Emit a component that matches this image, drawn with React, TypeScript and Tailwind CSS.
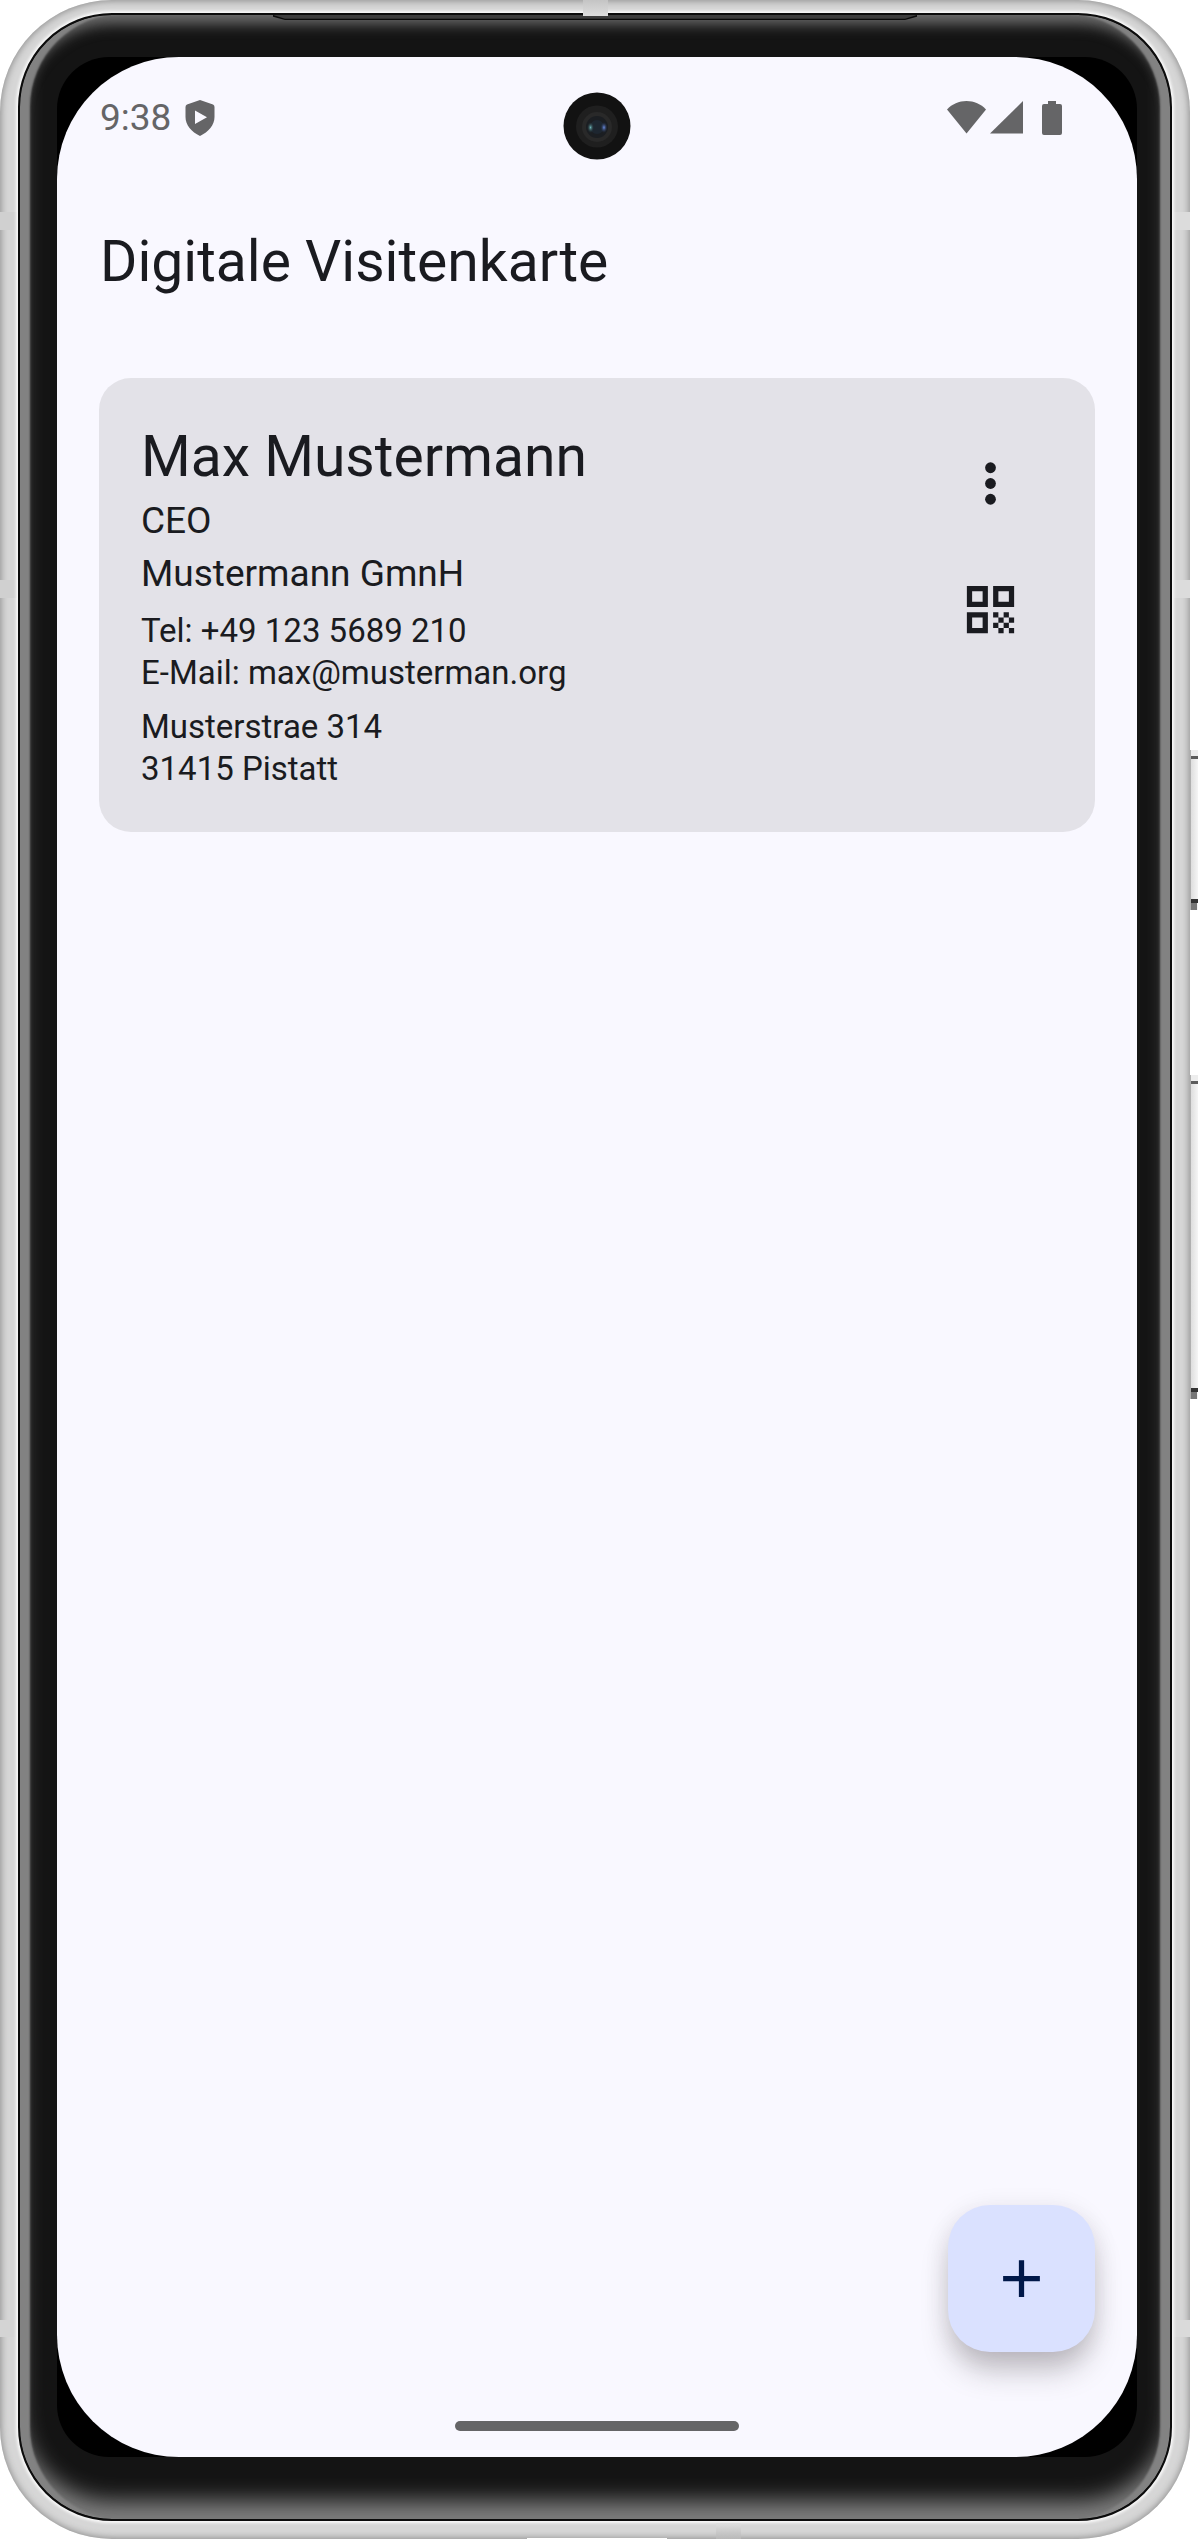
import React from "react";

const contact = {
  name: "Max Mustermann",
  role: "CEO",
  company: "Mustermann GmnH",
  phone: "+49 123 5689 210",
  email: "max@musterman.org",
  street: "Musterstrae 314",
  city: "31415 Pistatt",
};

function ShieldIcon() {
  return (
    <svg className="h-[36px] w-[30px]" viewBox="0 0 30 36" aria-hidden="true">
      <path
        fill="#656567"
        fillRule="evenodd"
        d="M15 0 L28 4.5 Q29.5 5 29.5 7 V17 C29.5 25 23.5 32 15 36 C6.500 32 .5 25 .5 17 V7 Q.5 5 2 4.500Z M10 10.500 V24 L22 17.200Z"
      />
    </svg>
  );
}

function WifiIcon() {
  return (
    <svg className="h-[34px] w-[39px]" viewBox="0 0 39 34" aria-hidden="true">
      <path fill="#656567" d="M19.500 32.500 L0 8.500 C5 3 12 0 19.500 0 S34 3 39 8.500Z" />
    </svg>
  );
}

function SignalIcon() {
  return (
    <svg className="h-[34px] w-[33px]" viewBox="0 0 33 34" aria-hidden="true">
      <path fill="#656567" d="M33 0 V32.500 H0Z" />
    </svg>
  );
}

function BatteryIcon() {
  return (
    <svg className="h-[34px] w-[20px]" viewBox="0 0 20 34" aria-hidden="true">
      <path
        fill="#656567"
        d="M6 0 H14 V3 H18 Q20 3 20 5 V32 Q20 34 18 34 H2 Q0 34 0 32 V5 Q0 3 2 3 H6Z"
      />
    </svg>
  );
}

function MoreIcon() {
  return (
    <svg className="size-[63px]" viewBox="0 0 24 24" fill="#1a1b20" aria-hidden="true">
      <circle cx="12" cy="6" r="2.050" />
      <circle cx="12" cy="12" r="2.050" />
      <circle cx="12" cy="18" r="2.050" />
    </svg>
  );
}

function QrIcon() {
  return (
    <svg className="size-[63px]" viewBox="0 0 24 24" fill="#1a1b20" aria-hidden="true">
      <path
        fillRule="evenodd"
        d="M3 3h8v8H3zM5 5v4h4V5zM13 3h8v8h-8zM15 5v4h4V5zM3 13h8v8H3zM5 15v4h4v-4z"
      />
      <path d="M13 13h2v2h-2zM17 13h2v2h-2zM15 15h2v2h-2zM19 15h2v2h-2zM13 17h2v2h-2zM17 17h2v2h-2zM15 19h2v2h-2zM19 19h2v2h-2z" />
    </svg>
  );
}

function CameraHole() {
  return (
    <svg
      className="absolute left-1/2 top-[35px] size-[68px] -translate-x-1/2"
      viewBox="0 0 68 68"
      aria-hidden="true"
    >
      <defs>
        <radialGradient id="lensTeal">
          <stop offset="0" stopColor="#6cb4b6" />
          <stop offset="1" stopColor="#24343a" stopOpacity="0" />
        </radialGradient>
        <radialGradient id="lensBlue">
          <stop offset="0" stopColor="#6c8fe6" />
          <stop offset="1" stopColor="#24304a" stopOpacity="0" />
        </radialGradient>
      </defs>
      <circle cx="34" cy="34" r="33.500" fill="#121212" />
      <circle cx="34" cy="34.500" r="21" fill="#1f1f1f" />
      <circle cx="34" cy="35" r="15" fill="#292929" />
      <circle cx="34" cy="35" r="11" fill="#1b1e22" />
      <circle cx="34" cy="35" r="7" fill="#1d2630" />
      <ellipse cx="27.500" cy="35.500" rx="3.500" ry="5.500" fill="url(#lensTeal)" />
      <ellipse cx="41" cy="35.500" rx="3.500" ry="5.500" fill="url(#lensBlue)" />
    </svg>
  );
}

function StatusBar() {
  return (
    <div className="relative flex h-[121px] items-center justify-between pl-[43px] pr-[75px] text-[#656567]">
      <div className="flex items-center gap-[14px]">
        <time className="text-[37px] leading-[44px]">9:38</time>
        <ShieldIcon />
      </div>
      <CameraHole />
      <div className="flex items-center">
        <WifiIcon />
        <span className="w-1" />
        <SignalIcon />
        <span className="w-[19px]" />
        <BatteryIcon />
      </div>
    </div>
  );
}

function ContactCard() {
  return (
    <article className="flex items-start justify-between rounded-[32px] bg-[#e3e2e8] p-[42px]">
      <div>
        <h2 className="text-[57px] leading-[74px]">{contact.name}</h2>
        <p className="text-[37px] leading-[53px]">{contact.role}</p>
        <p className="text-[37px] leading-[53px]">{contact.company}</p>
        <div className="mt-[10px] text-[33px] leading-[42px]">
          <p>Tel: {contact.phone}</p>
          <p>E-Mail: {contact.email}</p>
        </div>
        <address className="mt-3 text-[33px] leading-[42px] not-italic">
          <p>{contact.street}</p>
          <p>{contact.city}</p>
        </address>
      </div>
      <div className="flex flex-col">
        <button type="button" aria-label="Mehr" className="grid size-[126px] place-items-center">
          <MoreIcon />
        </button>
        <button type="button" aria-label="QR-Code" className="grid size-[126px] place-items-center">
          <QrIcon />
        </button>
      </div>
    </article>
  );
}

function AntennaBands() {
  return (
    <>
      <span className="absolute left-0 top-[212px] h-[18px] w-[17px] bg-[#d0d0d0]" />
      <span className="absolute left-0 top-[580px] h-[18px] w-[17px] bg-[#d0d0d0]" />
      <span className="absolute bottom-[202px] left-0 h-[17px] w-[16px] bg-[#d4d4d4]" />
      <span className="absolute right-0 top-[212px] h-[18px] w-[16px] bg-[#dcdcdc]" />
      <span className="absolute right-0 top-[580px] h-[18px] w-[16px] bg-[#dcdcdc]" />
      <span className="absolute bottom-[202px] right-0 h-[17px] w-[16px] bg-[#dadada]" />
      <span className="absolute left-[583px] top-0 z-10 h-[16px] w-[25px] bg-linear-to-b from-[#c4c4c4] to-[#dedede]" />
      <span className="absolute bottom-0 left-[716px] z-10 h-[16px] w-[25px] bg-linear-to-b from-[#e0e0e0] to-[#b8b8b8]" />
      <span className="absolute bottom-0 left-[527px] h-px w-[140px] bg-white" />
    </>
  );
}

function SpeakerSlit() {
  return (
    <svg
      className="absolute inset-x-0 top-0 mx-auto h-[5px] w-[644px]"
      viewBox="0 0 644 6"
      preserveAspectRatio="none"
      aria-hidden="true"
    >
      <path d="M0 2 L12 6 H632 L644 2 V0 H0Z" fill="#0a0a0a" />
      <path d="M0 0 L12 4.500 H632 L644 0Z" fill="#3d3d3d" />
    </svg>
  );
}

function SideKey({ tall = false }: { tall?: boolean }) {
  return (
    <div
      className={
        tall
          ? "flex h-[324px] shrink-0 flex-col border-l border-[#b0b0b0] bg-linear-to-r from-[#dedede] to-[#f5f5f5]"
          : "flex h-[160px] shrink-0 flex-col border-l border-[#b0b0b0] bg-linear-to-r from-[#dedede] to-[#f5f5f5]"
      }
    >
      <span className="h-[6px] bg-[#ededed]" />
      <span className="h-[3px] bg-[#5c5c5c]" />
      <span className="flex-1" />
      <span className="h-1 bg-[#333333]" />
      <span className="h-[7px] w-1.5 bg-[#777777]" />
    </div>
  );
}

export default function App() {
  return (
    <div className="flex min-h-screen bg-white font-[Roboto,sans-serif] text-[#1a1b20]">
      <div className="relative flex flex-1 flex-col rounded-[112px] bg-[#d6d6d6] px-[18px] pb-[18px] pt-[13px] shadow-[inset_0_0_7px_1px_#8c8c8c]">
        <AntennaBands />
        <div className="relative flex flex-1 flex-col rounded-[94px] border-2 border-[#0c0c0c] bg-[#141414] pb-[62px] pl-[37px] pr-[33px] pt-[42px] shadow-[0_0_3px_2px_#fafafa,inset_11px_0_2px_-1px_#828282,inset_-11px_0_2px_-1px_#828282,inset_0_10px_14px_-1px_#6c6c6c,inset_0_-18px_22px_0px_#808080]">
          <SpeakerSlit />
          <div className="flex flex-1 rounded-[52px] bg-black">
            <main className="flex flex-1 flex-col rounded-[122px] bg-[#f9f8ff]">
              <StatusBar />
              <header className="flex h-[168px] items-center px-[43px]">
                <h1 className="text-[57px] leading-[74px]">Digitale Visitenkarte</h1>
              </header>
              <section className="px-[42px] pt-[32px]">
                <ContactCard />
              </section>
              <div className="mt-auto flex justify-end px-[42px]">
                <button
                  type="button"
                  aria-label="Hinzufügen"
                  className="grid size-[147px] place-items-center rounded-[42px] bg-[#dae1ff] shadow-[0_22px_30px_-4px_rgba(40,30,35,0.26),0_4px_24px_0_rgba(40,30,35,0.10)]"
                >
                  <svg className="size-[63px]" viewBox="0 0 24 24" fill="#001849" aria-hidden="true">
                    <path d="M19 13h-6v6h-2v-6H5v-2h6V5h2v6h6z" />
                  </svg>
                </button>
              </div>
              <div className="mx-auto mb-[26px] mt-[69px] h-[10px] w-[284px] rounded-full bg-[#656567]" />
            </main>
          </div>
        </div>
      </div>
      <div className="flex w-2 flex-col gap-[165px] pt-[750px]">
        <SideKey />
        <SideKey tall />
      </div>
    </div>
  );
}
